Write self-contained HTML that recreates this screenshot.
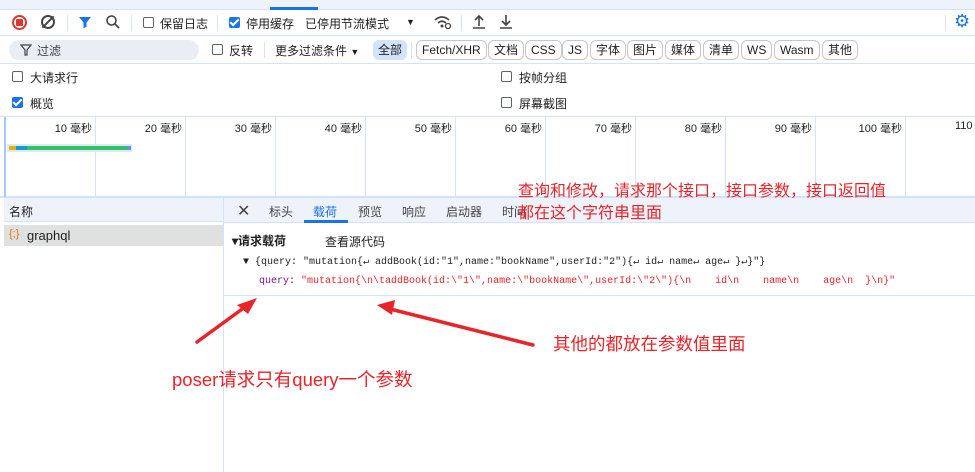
<!DOCTYPE html>
<html><head><meta charset="utf-8"><style>
*{box-sizing:border-box;margin:0;padding:0}
body{width:975px;height:472px;overflow:hidden;background:#fff;font-family:"Liberation Sans","Noto Sans CJK SC",sans-serif;font-size:12px;color:#1f1f1f;position:relative}
.a{position:absolute}
.cb{position:absolute;width:11px;height:11px;border:1px solid #5f6368;border-radius:2px;background:#fff}
.cbk{position:absolute;width:11px;height:11px;border-radius:2px;background:#1a73e8}
.cbk:after{content:"";position:absolute;left:3px;top:0px;width:3px;height:7px;border:solid #fff;border-width:0 2px 2px 0;transform:rotate(45deg)}
.pill{position:absolute;top:40px;height:20px;border:1px solid #c4c7c5;border-radius:6px;padding:0 5px;line-height:18px;font-size:12px;color:#1f1f1f}
.vl{position:absolute;top:117px;height:80px;width:1px;background:#d3e3fd}
.tl{position:absolute;top:120px;font-size:11px;text-align:right;width:60px}
.red{color:#e8242a;font-size:16px}
.mono{font-family:"Liberation Mono","Noto Sans CJK SC",monospace;font-size:10px}
</style></head><body>
<div class="a" style="left:0;top:0;width:975px;height:10px;background:#eef2fa;border-bottom:1px solid #d3e3fd"></div>
<div class="a" style="left:270px;top:7px;width:48px;height:3px;background:#1a73e8"></div>
<div class="a" style="left:0;top:10px;width:975px;height:26px;border-bottom:1px solid #d3e3fd"></div>
<div class="a" style="left:12px;top:15px;width:15px;height:15px;border:2px solid #dc362e;border-radius:50%"></div>
<div class="a" style="left:16px;top:19px;width:7px;height:7px;background:#dc362e;border-radius:1px"></div>
<div class="a" style="left:41px;top:15px;width:14px;height:14px;border:2px solid #444;border-radius:50%"></div>
<div class="a" style="left:47px;top:14px;width:2px;height:16px;background:#444;transform:rotate(45deg)"></div>
<div class="a" style="left:67px;top:15px;width:1px;height:16px;background:#d3e3fd"></div>
<svg class="a" style="left:78px;top:15px" width="14" height="14"><path d="M1 2h12L8.5 7.5V12L5.5 13V7.5Z" fill="#1a73e8"/></svg>
<svg class="a" style="left:105px;top:14px" width="16" height="16"><circle cx="6.5" cy="6.5" r="4.5" fill="none" stroke="#444" stroke-width="1.6"/><path d="M10 10l4 4" stroke="#444" stroke-width="1.8"/></svg>
<div class="a" style="left:131px;top:15px;width:1px;height:16px;background:#d3e3fd"></div>
<div class="cb" style="left:143px;top:17px"></div><div class="a" style="left:160px;top:15px">保留日志</div>
<div class="a" style="left:217px;top:15px;width:1px;height:16px;background:#d3e3fd"></div>
<div class="cbk" style="left:229px;top:17px"></div><div class="a" style="left:246px;top:15px">停用缓存</div>
<div class="a" style="left:305px;top:15px">已停用节流模式</div>
<div class="a" style="left:406px;top:17px;font-size:9px">▼</div>
<svg class="a" style="left:433px;top:14px" width="20" height="16"><path d="M2 6Q9 0 16 6M5 9Q9 5.5 13 9" stroke="#444" stroke-width="1.6" fill="none"/><circle cx="9" cy="12" r="1.5" fill="#444"/><circle cx="15" cy="12" r="2.5" fill="none" stroke="#444" stroke-width="1.3"/></svg>
<div class="a" style="left:461px;top:15px;width:1px;height:16px;background:#d3e3fd"></div>
<svg class="a" style="left:472px;top:14px" width="14" height="16"><path d="M7 12V2M3 6l4-4 4 4M1 14h12" stroke="#444" stroke-width="1.6" fill="none"/></svg>
<svg class="a" style="left:499px;top:14px" width="14" height="16"><path d="M7 1v10M3 7l4 4 4-4M1 14h12" stroke="#444" stroke-width="1.6" fill="none"/></svg>
<div class="a" style="left:945px;top:15px;width:1px;height:16px;background:#d3e3fd"></div>
<div class="a" style="left:954px;top:11px;font-size:18px;color:#1a73e8">⚙</div>
<div class="a" style="left:0;top:37px;width:975px;height:27px;border-bottom:1px solid #d3e3fd"></div>
<div class="a" style="left:9px;top:40px;width:190px;height:20px;background:#e9eef6;border-radius:10px"></div>
<svg class="a" style="left:20px;top:44px" width="12" height="12"><path d="M1 1h10L7 6v5L5 11V6Z" fill="none" stroke="#444" stroke-width="1.2"/></svg>
<div class="a" style="left:37px;top:42px;color:#444">过滤</div>
<div class="cb" style="left:212px;top:44px"></div><div class="a" style="left:229px;top:42px">反转</div>
<div class="a" style="left:264px;top:42px;width:1px;height:16px;background:#d3e3fd"></div>
<div class="a" style="left:275px;top:42px">更多过滤条件 <span style="font-size:9px">▼</span></div>
<div class="a" style="left:373px;top:40px;height:20px;width:34px;background:#d3e3fd;border-radius:6px;line-height:20px;text-align:center">全部</div>
<div class="a" style="left:411px;top:42px;width:1px;height:16px;background:#d3e3fd"></div>
<div class="pill" style="left:416px">Fetch/XHR</div>
<div class="pill" style="left:488px">文档</div>
<div class="pill" style="left:525px">CSS</div>
<div class="pill" style="left:562px">JS</div>
<div class="pill" style="left:590px">字体</div>
<div class="pill" style="left:627px">图片</div>
<div class="pill" style="left:665px">媒体</div>
<div class="pill" style="left:703px">清单</div>
<div class="pill" style="left:741px">WS</div>
<div class="pill" style="left:774px">Wasm</div>
<div class="pill" style="left:822px">其他</div>
<div class="cb" style="left:12px;top:71px"></div><div class="a" style="left:30px;top:69px">大请求行</div>
<div class="cbk" style="left:12px;top:97px"></div><div class="a" style="left:30px;top:95px">概览</div>
<div class="cb" style="left:501px;top:71px"></div><div class="a" style="left:519px;top:69px">按帧分组</div>
<div class="cb" style="left:501px;top:97px"></div><div class="a" style="left:519px;top:95px">屏幕截图</div>
<div class="a" style="left:0;top:116px;width:975px;height:1px;background:#d3e3fd"></div>
<div class="a" style="left:0;top:196px;width:975px;height:2px;background:#d3e3fd"></div>
<div class="a" style="left:4px;top:117px;width:2px;height:80px;background:#a8c7fa"></div>
<div class="vl" style="left:95px"></div><div class="vl" style="left:185px"></div><div class="vl" style="left:275px"></div><div class="vl" style="left:365px"></div><div class="vl" style="left:455px"></div><div class="vl" style="left:545px"></div><div class="vl" style="left:635px"></div><div class="vl" style="left:725px"></div><div class="vl" style="left:815px"></div><div class="vl" style="left:905px"></div>
<div class="tl" style="left:32px">10 毫秒</div><div class="tl" style="left:122px">20 毫秒</div><div class="tl" style="left:212px">30 毫秒</div><div class="tl" style="left:302px">40 毫秒</div><div class="tl" style="left:392px">50 毫秒</div><div class="tl" style="left:482px">60 毫秒</div><div class="tl" style="left:572px">70 毫秒</div><div class="tl" style="left:662px">80 毫秒</div><div class="tl" style="left:752px">90 毫秒</div><div class="tl" style="left:842px">100 毫秒</div><div class="a" style="left:955px;top:120px;font-size:11px">110</div>
<div class="a" style="left:7px;top:144px;width:125px;height:8px;background:#dde8fb"></div>
<div class="a" style="left:9px;top:146px;width:7px;height:4px;background:#e5b00c"></div>
<div class="a" style="left:16px;top:146px;width:11px;height:4px;background:#13a0c8"></div>
<div class="a" style="left:27px;top:146px;width:100px;height:4px;background:#34c163"></div>
<div class="a" style="left:127px;top:146px;width:4px;height:4px;background:#5b8ff9"></div>
<div class="a" style="left:0;top:198px;width:223px;height:24px;background:#eef2fa;border-bottom:1px solid #d3e3fd"></div>
<div class="a" style="left:9px;top:203px">名称</div>
<div class="a" style="left:223px;top:198px;width:1px;height:274px;background:#d3e3fd"></div>
<div class="a" style="left:4px;top:225px;width:219px;height:21px;background:#dfe1e0"></div>
<div class="a" style="left:9px;top:228px;color:#e8710a;font-size:11px">{;}</div>
<div class="a" style="left:27px;top:228px;font-size:13px">graphql</div>
<div class="a" style="left:0;top:198px;width:4px;height:274px;background:#fff"></div>
<div class="a" style="left:224px;top:198px;width:751px;height:25px;background:#eef2fa;border-bottom:1px solid #d3e3fd"></div>
<div class="a" style="left:237px;top:201px;font-size:16px;color:#444">✕</div>
<div class="a" style="left:269px;top:203px;color:#444">标头</div>
<div class="a" style="left:313px;top:203px;color:#1a73e8">载荷</div>
<div class="a" style="left:304px;top:220px;width:44px;height:3px;background:#1a73e8"></div>
<div class="a" style="left:358px;top:203px;color:#444">预览</div>
<div class="a" style="left:402px;top:203px;color:#444">响应</div>
<div class="a" style="left:446px;top:203px;color:#444">启动器</div>
<div class="a" style="left:502px;top:203px;color:#444">时间</div>
<div class="a" style="left:232px;top:232px;font-weight:bold">▾请求载荷</div>
<div class="a" style="left:325px;top:233px">查看源代码</div>
<div class="a mono" style="left:243px;top:256px;white-space:pre">▼ {query: "mutation{↵ addBook(id:"1",name:"bookName",userId:"2"){↵ id↵ name↵ age↵ }↵}"}</div>
<div class="a mono" style="left:259px;top:276px;white-space:pre"><span style="color:#881280">query</span>: <span style="color:#e8242a">"mutation{\n\taddBook(id:\"1\",name:\"bookName\",userId:\"2\"){\n    id\n    name\n    age\n  }\n}"</span></div>
<div class="a" style="left:224px;top:295px;width:751px;height:1px;background:#d3e3fd"></div>
<div class="a red" style="left:518px;top:181px;line-height:22px">查询和修改，请求那个接口，接口参数，接口返回值<br>都在这个字符串里面</div>
<div class="a red" style="left:553px;top:331px;font-size:17.5px">其他的都放在参数值里面</div>
<div class="a red" style="left:172px;top:366px;font-size:18.5px">poser请求只有query一个参数</div>
<svg class="a" style="left:0;top:0" width="975" height="472">
<path d="M197 342L245 307" stroke="#e8242a" stroke-width="3.5" stroke-linecap="round"/>
<path d="M257 298L237 305L248 314Z" fill="#e8242a"/>
<path d="M533 345L390 309" stroke="#e8242a" stroke-width="3.5" stroke-linecap="round"/>
<path d="M377 305L395 300L392 315Z" fill="#e8242a"/>
</svg>
</body></html>
